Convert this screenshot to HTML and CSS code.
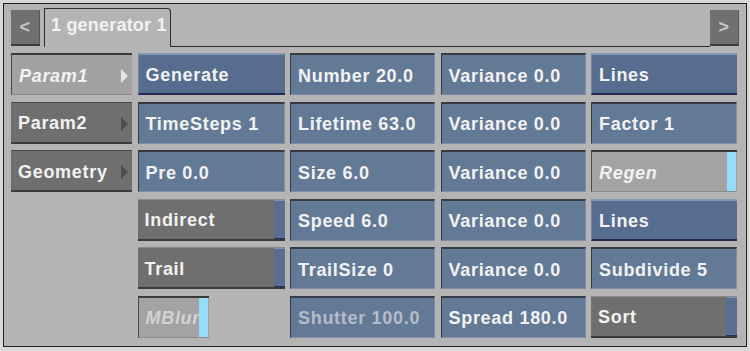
FILE: index.html
```html
<!DOCTYPE html>
<html lang="en">
<head>
    <meta charset="UTF-8">
    <meta name="viewport" content="width=device-width, initial-scale=1.0">
    <title>Generator</title>
    <link rel="stylesheet" href="styles.css">
</head>
<body>
    <div class="panel">
        <div class="tabbar">
            <div class="nav">&lt;</div>
            <div class="tab">1 generator 1</div>
            <div class="tab-fill"></div>
            <div class="nav">&gt;</div>
        </div>

        <div class="grid">
            <div class="menu selected">Param1<span class="arrow"></span></div>
            <div class="toggle">Generate</div>
            <div class="field">Number 20.0</div>
            <div class="field">Variance 0.0</div>
            <div class="toggle">Lines</div>

            <div class="menu">Param2<span class="arrow"></span></div>
            <div class="field">TimeSteps 1</div>
            <div class="field">Lifetime 63.0</div>
            <div class="field">Variance 0.0</div>
            <div class="field">Factor 1</div>

            <div class="menu">Geometry<span class="arrow"></span></div>
            <div class="field">Pre 0.0</div>
            <div class="field">Size 6.0</div>
            <div class="field">Variance 0.0</div>
            <div class="check">Regen<span class="bar"></span></div>

            <div class="empty"></div>
            <div class="switch">Indirect<span class="strip"></span></div>
            <div class="field">Speed 6.0</div>
            <div class="field">Variance 0.0</div>
            <div class="toggle">Lines</div>

            <div class="empty"></div>
            <div class="switch">Trail<span class="strip"></span></div>
            <div class="field">TrailSize 0</div>
            <div class="field">Variance 0.0</div>
            <div class="field">Subdivide 5</div>

            <div class="empty"></div>
            <div class="cell-left">
                <div class="check dim">MBlur<span class="bar"></span></div>
            </div>
            <div class="field disabled">Shutter 100.0</div>
            <div class="field">Spread 180.0</div>
            <div class="switch">Sort<span class="strip"></span></div>
        </div>
    </div>
</body>
</html>
```

FILE: styles.css
```css
body {
    margin: 0;
    padding: 3px;
    background: #d8d8d8;
    font-family: "Liberation Sans", Arial, sans-serif;
    font-weight: bold;
    font-size: 18px;
    letter-spacing: 0.7px;
    color: #f2f2f2;
}

.panel {
    height: 344px;
    box-sizing: border-box;
    border: 1px solid #1e1e1e;
    background: #b4b4b4;
    padding: 3px 7px 0 7px;
}

.tabbar {
    display: flex;
    align-items: flex-end;
    height: 40px;
}

.nav {
    width: 28px;
    height: 34px;
    background: #707070;
    border-bottom: 2px solid #3c3c3c;
    border-right: 1px solid #555;
    color: #c4c4c4;
    font-size: 18px;
    display: flex;
    align-items: center;
    justify-content: center;
    margin-bottom: 1px;
}

.tab {
    margin-left: 4px;
    width: 127px;
    height: 39px;
    box-sizing: border-box;
    border: 1px solid #2e2e2e;
    border-bottom: none;
    border-top-right-radius: 4px;
    padding: 6px 0 0 6px;
    font-size: 18px;
    letter-spacing: 0.2px;
    white-space: nowrap;
}

.tab-fill {
    flex: 1;
    align-self: stretch;
    border-bottom: 1px solid #2e2e2e;
}

.grid {
    display: grid;
    grid-template-columns: 121px 147px 145px 145px 146px;
    grid-template-rows: repeat(6, 42px);
    column-gap: 5.5px;
    row-gap: 6.5px;
    margin-top: 6px;
}

.grid > div {
    position: relative;
    box-sizing: border-box;
    display: flex;
    align-items: center;
    padding: 3px 0 0 7px;
    white-space: nowrap;
    overflow: hidden;
}

.menu {
    background: #6f6f6f;
    border-top: 1px solid #4a4a4a;
    border-bottom: 2px solid #3c3c3c;
}

.menu.selected {
    background: #a2a2a2;
    border-top: 2px solid #3a3a3a;
    border-left: 1px solid #4a4a4a;
    border-bottom: 1px solid #8a8a8a;
    font-style: italic;
}

.arrow {
    position: absolute;
    right: 4px;
    top: 14px;
    width: 0;
    height: 0;
    border-top: 7px solid transparent;
    border-bottom: 7px solid transparent;
    border-left: 7px solid #4c4c4c;
}

.selected .arrow {
    border-left-color: #e6e6e6;
}

.toggle {
    background: #566d8f;
    border-top: 2px solid #8496b5;
    border-left: 1px solid #7385a4;
    border-bottom: 2px solid #262a5a;
}

.field {
    background: #627a96;
    border-top: 2px solid #363c46;
    border-left: 1px solid #363c46;
    border-bottom: 1px solid #7f8ea4;
    border-right: 1px solid #7f8ea4;
}

.field.disabled {
    color: #b6bcc6;
}

.check {
    background: #a3a3a3;
    border-top: 2px solid #3a3a3a;
    border-left: 1px solid #4a4a4a;
    border-bottom: 1px solid #8c8c8c;
    font-style: italic;
}

.bar {
    position: absolute;
    right: 1px;
    top: 0;
    bottom: 0;
    width: 9px;
    background: #94defa;
}

.switch {
    background: #6f6f6f;
    border-top: 1px solid #8a8a8a;
    border-bottom: 2px solid #3a3a3a;
}

.strip {
    position: absolute;
    right: 0;
    top: -1px;
    bottom: 0;
    width: 11px;
    background: #5a6e8e;
    border-top: 2px solid #7f93b2;
    border-bottom: 1px solid #2a2e5c;
}

.grid > .empty,
.grid > .cell-left {
    padding: 0;
    background: none;
    align-items: stretch;
}

.check.dim {
    position: relative;
    display: flex;
    align-items: center;
    box-sizing: border-box;
    width: 71px;
    padding: 3px 0 0 7px;
    color: #d2d2d2;
    overflow: hidden;
}
```
